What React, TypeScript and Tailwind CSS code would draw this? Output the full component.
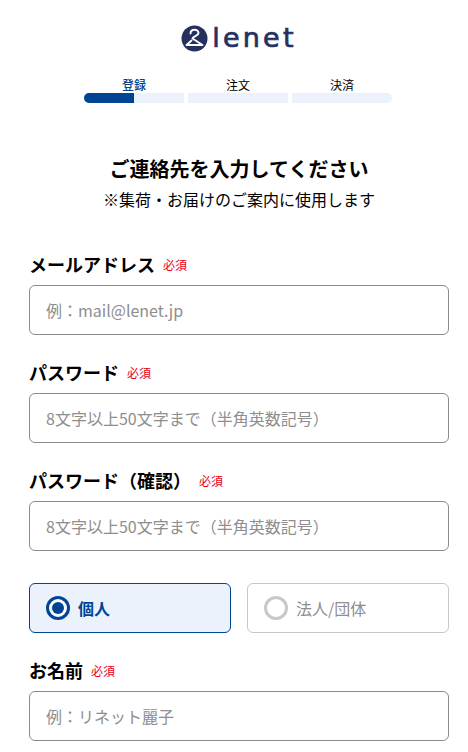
const jp = "font-['Noto_Sans_CJK_JP','Noto_Sans',sans-serif]"

function Logo() {
  return (
    <div className="flex items-center justify-center h-[26px]">
      <svg width="27" height="27" viewBox="0 0 27 27">
        <circle cx="13.5" cy="13.5" r="13" fill="#25305f" />
        <path d="M9.5 8.5 C9.5 3.5 17.5 3.5 17.5 8 C17.5 11 12 11 11.5 13.5 L21.5 20 L5.5 20 L10.5 15.5" fill="none" stroke="#fff" strokeWidth="1.9" strokeLinejoin="round" strokeLinecap="round" />
      </svg>
      <span className="ml-[4px] font-['DejaVu_Sans',sans-serif] text-[27px] leading-[26px] [-webkit-text-stroke:0.7px_#25305f] tracking-[3.2px] text-[#25305f]">lenet</span>
    </div>
  )
}

function Steps() {
  const steps = [
    { label: "登録", active: true },
    { label: "注文", active: false },
    { label: "決済", active: false },
  ]
  return (
    <div className="w-[308px] ml-[55px] grid grid-cols-3 gap-x-[4px] mt-[26px]">
      {steps.map((s) => (
        <div key={s.label} className={`text-center text-[12px] leading-[16px] ${s.active ? "font-medium text-[#004494]" : "text-black"}`}>{s.label}</div>
      ))}
      <div className="h-[10px] rounded-l-full bg-[#ebf2fb]">
        <div className="h-full w-1/2 rounded-l-full bg-[#004494]" />
      </div>
      <div className="h-[10px] bg-[#ebf2fb]" />
      <div className="h-[10px] rounded-r-full bg-[#ebf2fb]" />
    </div>
  )
}

function Field({ label, placeholder }: { label: string; placeholder: string }) {
  return (
    <div>
      <div className="flex items-center h-[27px] mb-[7px]">
        <span className="text-[18px] leading-[27px] font-bold text-black">{label}</span>
        <span className="ml-[8px] text-[12px] leading-[18px] text-[#e60012]">必須</span>
      </div>
      <input
        readOnly
        placeholder={placeholder}
        className="block w-full h-[50px] rounded-[6px] border border-[#8c8c8c] px-4 text-[16px] bg-white placeholder:text-[#8e8e8e] outline-none"
      />
    </div>
  )
}

export default function App() {
  return (
    <div className={`${jp} bg-white h-[752px] w-[468px] overflow-hidden pt-[25px] pl-[29px] pr-[19px]`}>
      <Logo />
      <Steps />
      <h1 className="mt-[51px] text-center text-[20px] leading-[30px] font-bold text-black">ご連絡先を入力してください</h1>
      <p className="mt-[3px] text-center text-[16px] leading-[24px] text-black">※集荷・お届けのご案内に使用します</p>
      <div className="mt-[40px] flex flex-col gap-[24px]">
        <Field label="メールアドレス" placeholder="例：mail@lenet.jp" />
        <Field label="パスワード" placeholder="8文字以上50文字まで（半角英数記号）" />
        <Field label="パスワード（確認）" placeholder="8文字以上50文字まで（半角英数記号）" />
        <div className="grid grid-cols-2 gap-[16px] mt-[8px]">
          <div className="h-[50px] rounded-[6px] border border-[#004494] bg-[#ebf2fb] flex items-center pl-[16px]">
            <span className="w-[24px] h-[24px] rounded-full border-[3px] border-[#004494] bg-white flex items-center justify-center">
              <span className="w-[12px] h-[12px] rounded-full bg-[#004494]" />
            </span>
            <span className="ml-[8px] text-[16px] font-bold text-[#004494]">個人</span>
          </div>
          <div className="h-[50px] rounded-[6px] border border-[#c8c8c8] bg-white flex items-center pl-[16px]">
            <span className="w-[24px] h-[24px] rounded-full border-[3px] border-[#c8c8c8] bg-white" />
            <span className="ml-[8px] text-[16px] text-[#8e8e8e]">法人/団体</span>
          </div>
        </div>
        <Field label="お名前" placeholder="例：リネット麗子" />
      </div>
    </div>
  )
}
